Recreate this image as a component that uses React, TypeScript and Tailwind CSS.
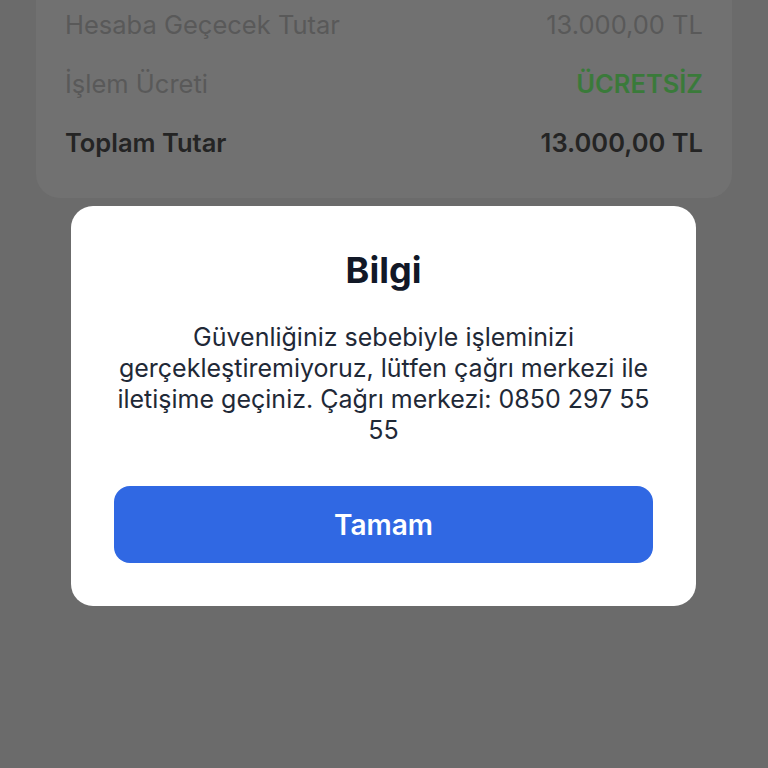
export default function App() {
    return (
        <div className="w-[768px] h-[768px] bg-[#6b6b6b] overflow-hidden" style={{ fontFamily: "Inter, 'Noto Sans', sans-serif" }}>
            <div className="mx-[36px] bg-[#717171] rounded-b-[24px] px-[29px] pt-[10px] pb-[40px] flex flex-col gap-[29px] text-[25.5px] leading-[30px]">
                <div className="flex justify-between">
                    <span className="text-[#595959]">Hesaba Geçecek Tutar</span>
                    <span className="text-[#595959]">13.000,00 TL</span>
                </div>
                <div className="flex justify-between">
                    <span className="text-[#595959]">İşlem Ücreti</span>
                    <span className="text-[#3a7a3a] font-semibold">ÜCRETSİZ</span>
                </div>
                <div className="flex justify-between font-semibold text-[#242424]">
                    <span>Toplam Tutar</span>
                    <span>13.000,00 TL</span>
                </div>
            </div>
            <div className="mt-[8px] ml-[71px] w-[625px] bg-white rounded-[22px] px-[43px] pt-[44px] pb-[43px] flex flex-col items-center">
                <h2 className="text-[36px] leading-[40px] font-bold text-[#111827]">Bilgi</h2>
                <p className="mt-[32px] text-[25px] leading-[31px] text-[#1f2937] text-center">
                    Güvenliğiniz sebebiyle işleminizi gerçekleştiremiyoruz, lütfen çağrı merkezi ile iletişime geçiniz. Çağrı merkezi: 0850 297 55 55
                </p>
                <button className="mt-[40px] w-full h-[77px] rounded-[16px] bg-[#3068e3] text-white text-[28px] font-semibold">
                    Tamam
                </button>
            </div>
        </div>
    );
}
